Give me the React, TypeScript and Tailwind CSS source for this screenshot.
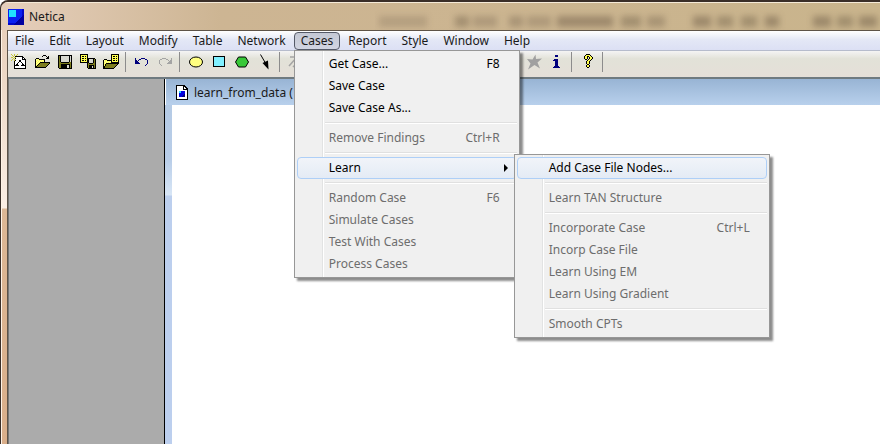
import type { ReactNode } from 'react'
import clsx from 'clsx'

type MenuEntry =
  | { label: string; shortcut?: string; disabled?: boolean; active?: boolean; submenu?: MenuEntry[] }
  | 'separator'

const learnMenu: MenuEntry[] = [
  { label: 'Add Case File Nodes...', active: true },
  'separator',
  { label: 'Learn TAN Structure', disabled: true },
  'separator',
  { label: 'Incorporate Case', shortcut: 'Ctrl+L', disabled: true },
  { label: 'Incorp Case File', disabled: true },
  { label: 'Learn Using EM', disabled: true },
  { label: 'Learn Using Gradient', disabled: true },
  'separator',
  { label: 'Smooth CPTs', disabled: true },
]

const casesMenu: MenuEntry[] = [
  { label: 'Get Case...', shortcut: 'F8' },
  { label: 'Save Case' },
  { label: 'Save Case As...' },
  'separator',
  { label: 'Remove Findings', shortcut: 'Ctrl+R', disabled: true },
  'separator',
  { label: 'Learn', active: true, submenu: learnMenu },
  'separator',
  { label: 'Random Case', shortcut: 'F6', disabled: true },
  { label: 'Simulate Cases', disabled: true },
  { label: 'Test With Cases', disabled: true },
  { label: 'Process Cases', disabled: true },
]

const menuTitles = ['File', 'Edit', 'Layout', 'Modify', 'Table', 'Network', 'Cases', 'Report', 'Style', 'Window', 'Help']

// One letter per colour, a dot is transparent
const palette: Record<string, string> = {
  k: '#000000',
  w: '#ffffff',
  y: '#ffff50',
  l: '#ffffa0',
  h: '#c8c83c',
  o: '#7d7d1e',
  g: '#a4a4a4',
  n: '#00007d',
  s: '#d8d8d0',
  b: '#0000e0',
  c: '#20d8ff',
}

function PixelIcon({ rows }: { rows: string[] }) {
  return (
    <svg width={rows[0].length} height={rows.length} shapeRendering="crispEdges" aria-hidden="true">
      {rows.flatMap((row, y) =>
        [...row].map((c, x) =>
          palette[c] ? <rect key={`${x}-${y}`} x={x} y={y} width={1} height={1} fill={palette[c]} /> : null
        )
      )}
    </svg>
  )
}

const newRows = [
  'h..h..h.........',
  '.h.h.h..........',
  '..h.kkkkkkkk....',
  'hh.hhwwwwwwkk...',
  '..h.kwwwwwwkwk..',
  '.h.h.wwwwwwkkkk.',
  'h..hkwwwkkwwwwk.',
  '...kwwwwkkwwwwk.',
  '...kwwwkwwkwwwk.',
  '...kwwkwwwwkwwk.',
  '...kwkkwwwwkkwk.',
  '...kkkkkwwkkkkk.',
  '...kwwwwwwwwwwk.',
  '...kwwwwwwwwwwk.',
  '...kkkkkkkkkkkk.',
  '................',
]

const openRows = [
  '................',
  '.........kkk....',
  '........k...k.k.',
  '.............kk.',
  '..kkk.......kkk.',
  '.kllykkkkkk.....',
  '.klylylylyk.....',
  '.kylylylylk.....',
  '.klylykkkkkkkkkk',
  '.kylykoooooooook',
  '.klykoooooooook.',
  '.kykoooooooook..',
  '.kkoooooooook...',
  '.kkkkkkkkkkk....',
  '................',
  '................',
]

const saveRows = [
  '................',
  '.kkkkkkkkkkkkkk.',
  '.kokssssssssksk.',
  '.kokssssssssksk.',
  '.kokssssssssksk.',
  '.kokssssssssksk.',
  '.kokssssssssksk.',
  '.kokssssssssksk.',
  '.kookkkkkkkkook.',
  '.kooooooooooook.',
  '.kookkkkkkkkkok.',
  '.kookkkkkksskok.',
  '.kookkkkkksskok.',
  '.kookkkkkksskok.',
  '..kkkkkkkkkkkkk.',
  '................',
]

const caseSaveRows = [
  'kkkkkkkk........',
  'kyyyyyyk........',
  'kykkykyk........',
  'kyyyyyyk........',
  'kykkykykkkkkkkk.',
  'kyyyyyykksssskok',
  'kykkykykksssskok',
  'kyyyyyykksssskok',
  'kkkkkkkkksssskok',
  '.......kokkkkook',
  '.......koooooook',
  '.......kokkkkkok',
  '.......kokkkskok',
  '.......kokkkskok',
  '........kkkkkkkk',
  '................',
]

const caseOpenRows = [
  '........kkkkkkkk',
  '........kyyyyyyk',
  '........kykkykyk',
  '........kyyyyyyk',
  '........kykkykyk',
  '.kkk....kyyyyyyk',
  'klyykkkkkykkykyk',
  'klylylylkyyyyyyk',
  'kylylylykkkkkkkk',
  'klykkkkkkkkkkkkk',
  'kykoooooooooook.',
  'kykooooooooook..',
  'kkooooooooook...',
  'kkoooooooook....',
  'kkkkkkkkkkk.....',
  '................',
]

const undoRows = [
  '................',
  '................',
  '................',
  '................',
  '.n.....nnnn.....',
  '.n...nn....nn...',
  '.nn.n........n..',
  '.nnn.........n..',
  '.nnnn........n..',
  '.nnnnn.......n..',
  '............n...',
  '...........n....',
  '................',
  '................',
  '................',
  '................',
]

const redoRows = undoRows.map((row) => [...row].reverse().join('').replaceAll('n', 'g'))

const infoRows = [
  '................',
  '......nnn.......',
  '......nnn.......',
  '................',
  '................',
  '.....nnnn.......',
  '....nnnnn.......',
  '......nnn.......',
  '......nnn.......',
  '......nnn.......',
  '......nnn.......',
  '......nnn.......',
  '.....nnnnn......',
  '....nnnnnnn.....',
  '................',
  '................',
]

const helpRows = [
  '......kkkk......',
  '.....kyyyyk.....',
  '....kyykkyyk....',
  '....kyyk.kyyk...',
  '....kyyk.kyyk...',
  '.....kk.kyyk....',
  '.......kyyk.....',
  '......kyyk......',
  '......kyyk......',
  '......kyyk......',
  '.......kk.......',
  '......kyyk......',
  '......kyyk......',
  '.......kk.......',
  '................',
  '................',
]

const docRows = [
  'kkkkkkkkk...',
  'kwwwwwwkkk..',
  'kwwwwwwkwkk.',
  'kwwwwwwkwwkk',
  'kwwwwwwkkkkk',
  'kwwwwwwwwwwk',
  'kwwccbbbbwwk',
  'kwwccbbbbwwk',
  'kwwbbbbbbwwk',
  'kwwbbbbbnwwk',
  'kwwbbbbnnwwk',
  'kwwbbbnnnwwk',
  'kwwwwwwwwwwk',
  'kwwwwwwwwwwk',
  'kkkkkkkkkkkk',
]

// Text of the window behind, seen through the glass title bar: x, width, opacity
const smudges = [
  [4, 48, 0.2],
  [80, 14, 0.35],
  [98, 24, 0.25],
  [134, 14, 0.3],
  [152, 24, 0.25],
  [182, 56, 0.4],
  [246, 20, 0.35],
  [272, 18, 0.3],
  [318, 18, 0.4],
  [342, 16, 0.35],
  [366, 16, 0.35],
  [390, 14, 0.4],
  [438, 18, 0.4],
  [462, 16, 0.35],
  [484, 18, 0.4],
]

function ShapeIcon({ children }: { children: ReactNode }) {
  return (
    <svg width="16" height="16" viewBox="0 0 16 16" aria-hidden="true">
      {children}
    </svg>
  )
}

function Tool({ name, disabled, children }: { name: string; disabled?: boolean; children: ReactNode }) {
  return (
    <button type="button" aria-label={name} disabled={disabled} className="flex h-5 w-[23px] shrink-0 items-center pl-[3px]">
      {children}
    </button>
  )
}

function ToolDivider() {
  return (
    <div className="flex h-5 w-2 shrink-0 pl-[2px]">
      <div className="w-px bg-[#8c8c8c]" />
    </div>
  )
}

function Menu({ entries, className }: { entries: MenuEntry[]; className: string }) {
  return (
    <ul
      className={clsx(
        'absolute border border-[#979797] bg-[#f0f0f0] bg-[linear-gradient(90deg,transparent_27px,#e2e3e3_27px,#e2e3e3_28px,#fff_28px,#fff_29px,transparent_29px)] p-[2px] shadow-[3px_3px_2px_rgba(0,0,0,0.45)]',
        className
      )}
    >
      {entries.map((entry, i) =>
        entry === 'separator' ? (
          <li key={i} className="flex h-2 items-center pl-7">
            <div className="h-[2px] w-full border-t border-[#e0e0e0] bg-white" />
          </li>
        ) : (
          <li key={i} className="relative">
            <button
              type="button"
              disabled={entry.disabled}
              className={clsx(
                'flex h-[22px] w-full items-center rounded-sm border pr-4 pl-[31px] text-left',
                entry.disabled ? 'text-[#6d6d6d]' : 'text-black',
                entry.active ? 'border-[#aecff7] bg-linear-to-b from-[#f1f4f9] to-[#e4ebf5]' : 'border-transparent'
              )}
            >
              <span className="grow">{entry.label}</span>
              {entry.shortcut && <span>{entry.shortcut}</span>}
              {entry.submenu && (
                <svg width="4" height="8" viewBox="0 0 4 8" className="-mr-2" aria-hidden="true">
                  <path d="M0 0L4 4L0 8Z" fill="#000" />
                </svg>
              )}
            </button>
            {entry.submenu && <Menu entries={entry.submenu} className="-top-[3px] left-[217px] z-10 w-64" />}
          </li>
        )
      )}
    </ul>
  )
}

function MenuBar() {
  return (
    <nav className="flex h-5 items-center gap-px border-b border-[#b6bccc] bg-linear-to-b from-white via-[#e4e8f6] via-45% to-[#dce0f4]">
      {menuTitles.map((title) =>
        title === 'Cases' ? (
          <div key={title} className="relative">
            <button
              type="button"
              aria-expanded="true"
              className="flex h-[18px] items-center rounded-sm border border-[#555a68] bg-linear-to-b from-[#c4c8d4] to-[#d2d5e2] px-[6px]"
            >
              {title}
            </button>
            <Menu entries={casesMenu} className="top-[18px] left-0 z-20 w-[226px]" />
          </div>
        ) : (
          <button key={title} type="button" className="flex h-[18px] items-center px-[7px]">
            {title}
          </button>
        )
      )}
    </nav>
  )
}

function Toolbar() {
  return (
    <div className="flex h-7 items-center border-b-2 border-[#6f7a80] bg-linear-to-b from-[#f4f4f4] via-[#e2e2d8] via-30% to-[#e5dfd8] pb-1">
      <Tool name="New network">
        <PixelIcon rows={newRows} />
      </Tool>
      <Tool name="Open">
        <PixelIcon rows={openRows} />
      </Tool>
      <Tool name="Save">
        <PixelIcon rows={saveRows} />
      </Tool>
      <Tool name="Save case">
        <PixelIcon rows={caseSaveRows} />
      </Tool>
      <Tool name="Get case">
        <PixelIcon rows={caseOpenRows} />
      </Tool>
      <ToolDivider />
      <Tool name="Undo">
        <PixelIcon rows={undoRows} />
      </Tool>
      <Tool name="Redo" disabled>
        <PixelIcon rows={redoRows} />
      </Tool>
      <ToolDivider />
      <Tool name="Nature node">
        <ShapeIcon>
          <ellipse cx="8" cy="8" rx="6.5" ry="5" fill="#ffff80" stroke="#000" />
        </ShapeIcon>
      </Tool>
      <Tool name="Decision node">
        <ShapeIcon>
          <rect x="2.5" y="2.5" width="11" height="10" fill="#80f0ff" stroke="#000" />
        </ShapeIcon>
      </Tool>
      <Tool name="Utility node">
        <ShapeIcon>
          <path d="M4.500 3h7l3 5l-3 5h-7l-3-5z" fill="#38c838" stroke="#000" />
        </ShapeIcon>
      </Tool>
      <Tool name="Link">
        <ShapeIcon>
          <path d="M3.500 0.500L9 10" stroke="#000" fill="none" />
          <path d="M5.500 9L11 6.500L11.500 15.500Z" fill="#000" />
        </ShapeIcon>
      </Tool>
      <ToolDivider />
      <Tool name="Cut links" disabled>
        <ShapeIcon>
          <path d="M2 3h7M9 3v5M9 3L1 12M5 13L12 6M7 14l7-7" stroke="#a5a5a5" strokeWidth="1.5" fill="none" />
        </ShapeIcon>
      </Tool>
      <div className="w-[215px] shrink-0" />
      <Tool name="Compile" disabled>
        <ShapeIcon>
          <path d="M9.500 0.500L10 5L16 4.500L11.500 8.500L14 14.500L8.500 11L2 15.500L4.500 9.500L1 5L6.500 5.500Z" fill="#a0a0a0" />
        </ShapeIcon>
      </Tool>
      <Tool name="Information">
        <PixelIcon rows={infoRows} />
      </Tool>
      <ToolDivider />
      <Tool name="Help">
        <PixelIcon rows={helpRows} />
      </Tool>
      <ToolDivider />
    </div>
  )
}

export default function App() {
  return (
    <div className="flex h-screen flex-col overflow-hidden rounded-tl-lg border-t-2 border-l border-[#3a2e28] bg-linear-to-r from-[#e6cfbc] via-[#cdb593] via-25% to-[#c9b48c] font-['Noto_Sans','Open_Sans',sans-serif] text-xs text-[#1a1a1a]">
      <header className="flex h-7 shrink-0 items-center gap-[5px] border-t border-[#f5ead8] pl-[7px]">
        <svg width="16" height="16" shapeRendering="crispEdges" aria-hidden="true">
          <rect width="16" height="16" fill="#0008c8" />
          <rect width="14" height="14" fill="#0a20f0" />
          <path d="M16 5V16H5Z" fill="#0000a0" />
          <rect x="1" y="1" width="7" height="7" fill="#20e0ff" />
        </svg>
        <h1>Netica</h1>
        <svg width="505" height="27" className="ml-auto" aria-hidden="true">
          <g className="blur-[3px]" fill="#5c4c3a">
            {smudges.map(([x, width, opacity]) => (
              <rect key={x} x={x} y={13} width={width} height={11} opacity={opacity} />
            ))}
          </g>
        </svg>
      </header>

      <div className="flex min-h-0 grow">
        <div className="w-[6px] shrink-0 border-l border-[#fff3e6] bg-[linear-gradient(#e8d0bc,#fbeee4_178px,#dcb795_179px,#d9ae8a)]" />
        <div className="flex min-w-0 grow flex-col border-t border-l border-[#5d5348]">
          <MenuBar />
          <Toolbar />
          <div className="flex min-h-0 grow border-l border-[#777] bg-[#ababab]">
            <div className="w-[155px] shrink-0" />
            <main className="flex min-w-0 grow flex-col border-l border-black bg-[linear-gradient(#b4cae4,#b8cde8_80px,#d8e6f6_116px,#bccfee_117px)]">
              <div className="flex h-[26px] shrink-0 items-center gap-[6px] border-l border-white bg-linear-to-b from-[#98b4d4] to-[#b8d0ec] pl-[10px]">
                <PixelIcon rows={docRows} />
                <h2 className="pt-px">learn_from_data (</h2>
              </div>
              <div className="ml-[7px] grow bg-white" />
            </main>
          </div>
        </div>
      </div>
    </div>
  )
}
